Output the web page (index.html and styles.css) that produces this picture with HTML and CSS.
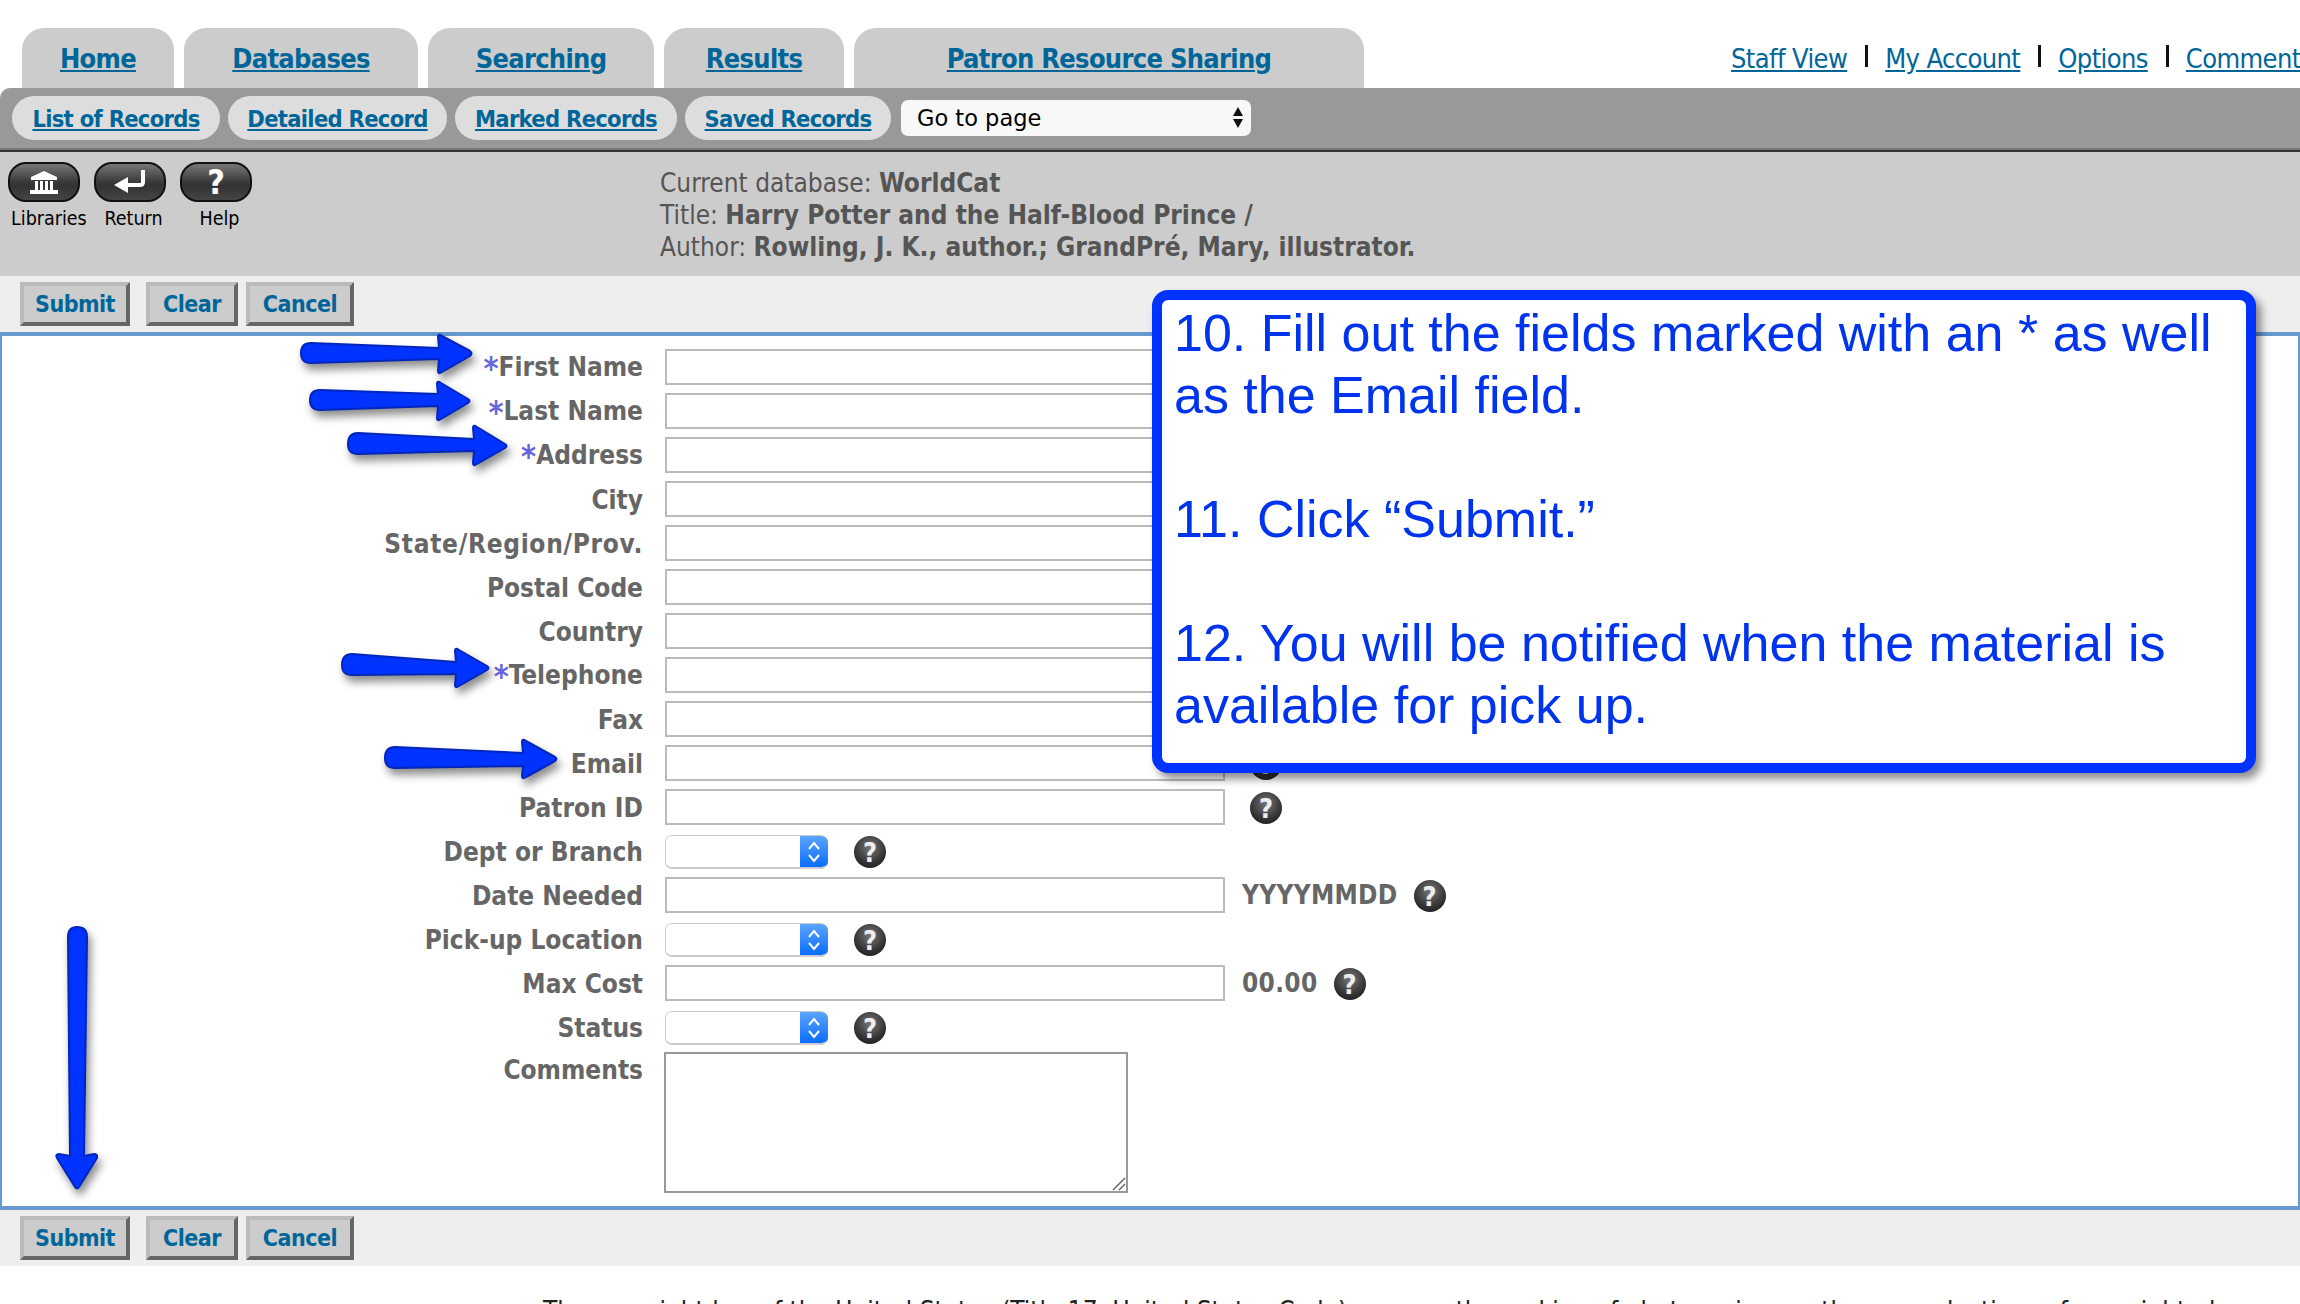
FILE: index.html
```html
<!DOCTYPE html>
<html lang="en">
<head>
    <meta charset="UTF-8">
    <title>Patron Resource Sharing</title>
    <link rel="stylesheet" href="styles.css">
</head>
<body>
    <!-- Top Tabs -->
    <header class="top-row">
        <nav class="tabs">
            <a class="tab tab-home" href="#">Home</a>
            <a class="tab tab-databases" href="#">Databases</a>
            <a class="tab tab-searching" href="#">Searching</a>
            <a class="tab tab-results" href="#">Results</a>
            <a class="tab tab-sharing" href="#">Patron Resource Sharing</a>
        </nav>
        <nav class="util-links">
            <a href="#">Staff View</a>
            <span class="util-sep"></span>
            <a href="#">My Account</a>
            <span class="util-sep"></span>
            <a href="#">Options</a>
            <span class="util-sep"></span>
            <a href="#">Comments</a>
        </nav>
    </header>

    <!-- Sub Navigation -->
    <div class="subnav">
        <a class="pill pill-list" href="#">List of Records</a>
        <a class="pill pill-detail" href="#">Detailed Record</a>
        <a class="pill pill-marked" href="#">Marked Records</a>
        <a class="pill pill-saved" href="#">Saved Records</a>
        <div class="goto">
            <select class="goto-select">
                <option>Go to page</option>
            </select>
            <span class="goto-arrows"></span>
        </div>
    </div>

    <!-- Toolbar and Record Info -->
    <div class="band">
        <div class="tools">
            <div class="tool">
                <span class="tool-btn">
                    <svg width="34" height="26" viewBox="0 0 34 26">
                        <path d="M17 2 L30 8 V11 H4 V8 Z" fill="#fff"/>
                        <rect x="8" y="12" width="3" height="9" fill="#fff"/>
                        <rect x="13" y="12" width="3" height="9" fill="#fff"/>
                        <rect x="18" y="12" width="3" height="9" fill="#fff"/>
                        <rect x="23" y="12" width="3" height="9" fill="#fff"/>
                        <rect x="3" y="21" width="28" height="4" fill="#fff"/>
                    </svg>
                </span>
                <span class="tool-label">Libraries</span>
            </div>
            <div class="tool">
                <span class="tool-btn">
                    <svg width="36" height="26" viewBox="0 0 36 26">
                        <path d="M31 1 V13 Q31 16 28 16 H15" fill="none" stroke="#fff" stroke-width="4"/>
                        <path d="M2 16 L16 8 V24 Z" fill="#fff"/>
                    </svg>
                </span>
                <span class="tool-label">Return</span>
            </div>
            <div class="tool">
                <span class="tool-btn tool-help">?</span>
                <span class="tool-label">Help</span>
            </div>
        </div>
        <div class="record-info">
            <div>Current database: <b>WorldCat</b></div>
            <div>Title: <b>Harry Potter and the Half-Blood Prince /</b></div>
            <div>Author: <b>Rowling, J. K., author.; GrandPré, Mary, illustrator.</b></div>
        </div>
    </div>

    <div class="button-bar">
        <button class="btn btn-submit">Submit</button>
        <button class="btn btn-clear">Clear</button>
        <button class="btn btn-cancel">Cancel</button>
    </div>

    <!-- Request Form -->
    <form class="request-form">
        <div class="row"><label><span class="req">*</span>First Name</label><input type="text"></div>
        <div class="row"><label><span class="req">*</span>Last Name</label><input type="text"></div>
        <div class="row"><label><span class="req">*</span>Address</label><input type="text"></div>
        <div class="row"><label>City</label><input type="text"></div>
        <div class="row"><label class="label-wide">State/Region/Prov.</label><input type="text"></div>
        <div class="row"><label>Postal Code</label><input type="text"></div>
        <div class="row"><label>Country</label><input type="text"></div>
        <div class="row"><label><span class="req">*</span>Telephone</label><input type="text"></div>
        <div class="row"><label>Fax</label><input type="text"></div>
        <div class="row"><label>Email</label><input type="text"><span class="help">?</span></div>
        <div class="row"><label>Patron ID</label><input type="text"><span class="help">?</span></div>
        <div class="row">
            <label>Dept or Branch</label>
            <div class="mac-select"><select></select><span class="stepper"><svg width="14" height="24" viewBox="0 0 14 24"><path d="M2 9 L7 3 L12 9 M2 15 L7 21 L12 15" fill="none" stroke="#fff" stroke-width="2"/></svg></span></div>
            <span class="help help-select">?</span>
        </div>
        <div class="row"><label>Date Needed</label><input type="text"><span class="hint">YYYYMMDD</span><span class="help help-hint">?</span></div>
        <div class="row">
            <label>Pick-up Location</label>
            <div class="mac-select"><select></select><span class="stepper"><svg width="14" height="24" viewBox="0 0 14 24"><path d="M2 9 L7 3 L12 9 M2 15 L7 21 L12 15" fill="none" stroke="#fff" stroke-width="2"/></svg></span></div>
            <span class="help help-select">?</span>
        </div>
        <div class="row"><label>Max Cost</label><input type="text"><span class="hint">00.00</span><span class="help help-hint">?</span></div>
        <div class="row">
            <label>Status</label>
            <div class="mac-select"><select></select><span class="stepper"><svg width="14" height="24" viewBox="0 0 14 24"><path d="M2 9 L7 3 L12 9 M2 15 L7 21 L12 15" fill="none" stroke="#fff" stroke-width="2"/></svg></span></div>
            <span class="help help-select">?</span>
        </div>
        <div class="row row-comments">
            <label>Comments</label>
            <div class="comments-box">
                <textarea></textarea>
                <svg class="grip" width="14" height="14" viewBox="0 0 14 14"><path d="M1 13 L13 1 M7 13 L13 7" stroke="#666" stroke-width="1.5"/></svg>
            </div>
        </div>
    </form>

    <div class="button-bar">
        <button class="btn btn-submit">Submit</button>
        <button class="btn btn-clear">Clear</button>
        <button class="btn btn-cancel">Cancel</button>
    </div>

    <p class="legal">The copyright law of the United States (Title 17, United States Code) governs the making of photocopies or other reproductions of copyrighted</p>

    <!-- Annotation Arrows -->
    <svg class="arrows" width="2300" height="1304" viewBox="0 0 2300 1304">
        <g class="arrow">
            <path d="M311 343 L439 348 L438 337 Q438 333 442 336 L470 351 Q473 353 470 356 L442 372 Q438 375 438 371 L439 359 L311 363 Q301 363 301 353 Q301 343 311 343 Z"/>
            <path d="M320 390 L438 394 L437 384 Q437 380 441 383 L468 399 Q471 401 468 403 L441 419 Q437 422 437 418 L438 406 L320 410 Q310 410 310 400 Q310 390 320 390 Z"/>
            <path d="M358 433 L474 439 L473 428 Q473 424 477 427 L505 444 Q508 446 505 448 L477 464 Q473 467 473 463 L474 451 L358 454 Q348 454 348 444 Q348 433 358 433 Z"/>
            <path d="M352 654 L456 662 L455 651 Q455 647 459 650 L487 666 Q490 668 487 670 L459 686 Q455 689 455 685 L456 674 L352 675 Q342 675 342 665 Q342 654 352 654 Z"/>
            <path d="M395 747 L523 753 L522 742 Q522 738 526 741 L555 757 Q558 759 555 761 L526 777 Q522 780 522 776 L523 766 L395 768 Q385 768 385 758 Q385 747 395 747 Z"/>
            <path d="M68 937 Q68 927 77 927 Q87 927 87 937 L84 1156 L94 1154 Q98 1154 97 1158 L79 1187 Q77 1190 75 1187 L57 1158 Q55 1154 59 1154 L70 1156 Z"/>
        </g>
    </svg>

    <!-- Instruction Callout -->
    <div class="callout">
        <p>10. Fill out the fields marked with an * as well as the Email field.</p>
        <p>11. Click “Submit.”</p>
        <p>12. You will be notified when the material is available for pick up.</p>
    </div>
</body>
</html>
```

FILE: styles.css
```css
/* General Styling */
html, body {
    height: 100%;
    overflow: hidden;
}

body {
    margin: 0;
    position: relative;
    background: #fff;
    font-family: "DejaVu Sans", sans-serif;
    font-stretch: condensed;
    font-size: 24px;
    color: #666;
}

a {
    color: #006699;
}

/* Top Tabs */
.top-row {
    display: flex;
    align-items: flex-end;
    height: 88px;
    padding-left: 22px;
}

.tabs {
    display: flex;
    gap: 10px;
    flex-shrink: 0;
}

.tab {
    display: flex;
    align-items: center;
    justify-content: center;
    height: 60px;
    padding-top: 1px;
    box-sizing: border-box;
    background: #ccc;
    border-radius: 22px 22px 0 0;
    font-size: 27px;
    font-weight: bold;
    letter-spacing: -0.7px;
}

.tab-home { width: 152px; }
.tab-databases { width: 234px; }
.tab-searching { width: 226px; }
.tab-results { width: 180px; }
.tab-sharing { width: 510px; }

.util-links {
    display: flex;
    align-items: center;
    flex-shrink: 0;
    height: 60px;
    margin-left: 367px;
    font-size: 27px;
    letter-spacing: -0.6px;
    white-space: nowrap;
}

.util-sep {
    width: 3px;
    height: 22px;
    margin: 0 17px 4px 18px;
    background: #111;
}

/* Sub Navigation */
.subnav {
    display: flex;
    align-items: flex-start;
    gap: 8px;
    height: 62px;
    padding: 8px 0 0 12px;
    box-sizing: border-box;
    background: #999;
    border-top-left-radius: 10px;
    border-bottom: 2px solid #777;
}

.pill {
    display: flex;
    align-items: center;
    justify-content: center;
    height: 44px;
    padding-top: 1px;
    box-sizing: border-box;
    background: #ddd;
    border-radius: 22px;
    font-size: 23.5px;
    font-weight: bold;
    letter-spacing: -0.7px;
}

.pill-list { width: 208px; }
.pill-detail { width: 219px; }
.pill-marked { width: 222px; }
.pill-saved { width: 206px; }

.goto {
    position: relative;
    margin: 4px 0 0 2px;
}

.goto-select {
    display: block;
    width: 350px;
    height: 36px;
    padding: 0 0 0 16px;
    border: none;
    border-radius: 7px;
    background: #f8f8f8;
    color: #000;
    font-family: "DejaVu Sans", sans-serif;
    font-size: 22.5px;
    appearance: none;
}

.goto-arrows {
    position: absolute;
    right: 8px;
    top: 7px;
    width: 0;
    height: 0;
    border-left: 5px solid transparent;
    border-right: 5px solid transparent;
    border-bottom: 9px solid #111;
}

.goto-arrows::after {
    content: "";
    position: absolute;
    left: -5px;
    top: 12px;
    border-left: 5px solid transparent;
    border-right: 5px solid transparent;
    border-top: 9px solid #111;
}

/* Toolbar and Record Info */
.band {
    display: flex;
    height: 126px;
    padding: 10px 0 0 8px;
    box-sizing: border-box;
    background: #ccc;
    border-top: 2px solid #333;
}

.tools {
    display: flex;
    gap: 14px;
    width: 244px;
    flex-shrink: 0;
}

.tool {
    display: flex;
    flex-direction: column;
    width: 72px;
}

.tool-btn {
    display: flex;
    align-items: center;
    justify-content: center;
    height: 40px;
    box-sizing: border-box;
    border: 2px solid #111;
    border-radius: 18px;
    background: linear-gradient(#777, #3a3a3a 50%, #333 60%, #444);
}

.tool-help {
    color: #fff;
    font-size: 34px;
    font-weight: bold;
    line-height: 1;
}

.tool-label {
    margin-top: 5px;
    margin-right: -4px;
    padding-left: 3px;
    color: #000;
    font-size: 19.5px;
    text-align: center;
    white-space: nowrap;
}

.record-info {
    margin-left: 408px;
    padding-top: 5px;
    color: #555;
    font-size: 26px;
    line-height: 32px;
    white-space: nowrap;
}

/* Submit / Clear / Cancel */
.button-bar {
    display: flex;
    height: 56px;
    padding: 6px 0 0 20px;
    box-sizing: border-box;
    background: #eee;
}

.btn {
    height: 44px;
    padding: 0;
    background: #ccc;
    border: 4px solid;
    border-color: #bbb #666 #666 #bbb;
    color: #006699;
    font-family: "DejaVu Sans", sans-serif;
    font-stretch: condensed;
    font-size: 23px;
    font-weight: bold;
    letter-spacing: -0.5px;
}

.btn-submit { width: 110px; margin-right: 16px; }
.btn-clear { width: 92px; margin-right: 8px; }
.btn-cancel { width: 108px; }

/* Request Form */
.request-form {
    height: 878px;
    padding-top: 9px;
    box-sizing: border-box;
    background: #fff;
    border: solid #6699cc;
    border-width: 4px 2px;
}

.row {
    display: flex;
    align-items: center;
    height: 44px;
}

.row label {
    width: 641px;
    margin-right: 22px;
    padding-top: 1px;
    flex-shrink: 0;
    font-size: 26px;
    font-weight: bold;
    text-align: right;
    white-space: nowrap;
}

.row label.label-wide {
    letter-spacing: 0.7px;
}

.req {
    color: #6666dd;
    font-size: 32px;
    line-height: 1;
    vertical-align: -3px;
}

.row input {
    width: 560px;
    height: 36px;
    box-sizing: border-box;
    border: 2px solid #bbb;
    background: #fff;
}

.hint {
    margin-left: 17px;
    font-size: 26px;
    font-weight: bold;
    letter-spacing: 0.3px;
}

/* Small help icon */
.help {
    display: flex;
    align-items: center;
    justify-content: center;
    width: 32px;
    height: 32px;
    margin: 2px 0 0 25px;
    flex-shrink: 0;
    border-radius: 50%;
    background: radial-gradient(circle at 50% 35%, #777, #333 60%, #111);
    color: #eee;
    font-size: 27px;
    font-weight: bold;
}

.help-select { margin-left: 26px; }
.help-hint { margin-left: 16px; }

/* Select with blue stepper */
.mac-select {
    display: flex;
    width: 163px;
    height: 34px;
    margin-top: 2px;
    box-sizing: border-box;
    border: 1px solid #ccc;
    border-right: none;
    border-bottom: 2px solid #ccc;
    border-radius: 7px;
    overflow: hidden;
}

.mac-select select {
    flex: 1;
    min-width: 0;
    border: none;
    background: #fff;
    appearance: none;
}

.stepper {
    display: flex;
    align-items: center;
    justify-content: center;
    width: 28px;
    background: linear-gradient(#5aa5ff, #0a6cff);
}

.row-comments {
    align-items: flex-start;
    height: auto;
    padding-top: 3px;
}

.row-comments label {
    margin-right: 21px;
    padding-top: 3px;
}

.comments-box {
    position: relative;
    width: 464px;
    height: 141px;
}

.comments-box textarea {
    display: block;
    width: 100%;
    height: 100%;
    padding: 0;
    box-sizing: border-box;
    border: 2px solid #999;
    background: #fff;
    resize: none;
}

.grip {
    position: absolute;
    right: 2px;
    bottom: 2px;
}

/* Cut-off line at the bottom */
.legal {
    margin: 29px 0 0 543px;
    color: #222;
    font-size: 26px;
    line-height: 32px;
    white-space: nowrap;
}

/* Annotation Arrows */
.arrows {
    position: absolute;
    top: 0;
    left: 0;
    pointer-events: none;
}

.arrow {
    fill: #0033ff;
    stroke: #0026bb;
    stroke-width: 2;
    stroke-linejoin: round;
    filter: drop-shadow(3px 6px 4px rgba(0, 0, 0, 0.45));
}

/* Instruction Callout */
.callout {
    position: absolute;
    left: 1152px;
    top: 290px;
    width: 1104px;
    height: 483px;
    padding: 2px 12px;
    box-sizing: border-box;
    background: #fff;
    border: 10px solid #0033ff;
    border-radius: 16px;
    box-shadow: 5px 6px 8px rgba(0, 0, 0, 0.45);
    color: #0033ee;
    font-family: "Liberation Sans", sans-serif;
    font-size: 52px;
    line-height: 62px;
}

.callout p {
    margin: 0 0 62px;
}
```
